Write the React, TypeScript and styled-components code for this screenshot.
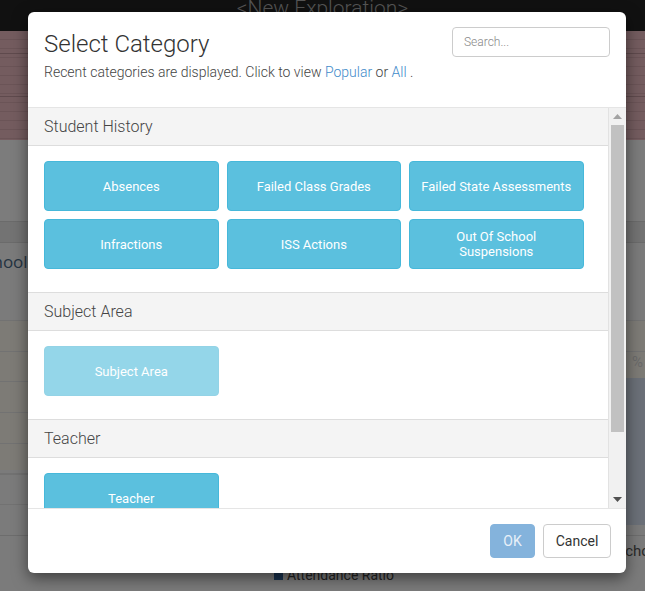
import React from "react";
import styled, { createGlobalStyle } from "styled-components";

const GlobalStyle = createGlobalStyle`
  html, body { margin: 0; padding: 0; }
  body {
    font-family: Roboto, "Liberation Sans", Arial, sans-serif;
    background: #7b7b7b;
    overflow: hidden;
  }
  * { box-sizing: border-box; }
`;

/* ---------- dimmed page behind the dialog ---------- */

const Page = styled.div`
  position: relative;
  width: 645px;
  height: 591px;
  overflow: hidden;
  display: flex;
  flex-direction: column;
  background: #7b7b7b;
`;

const TopBar = styled.div`
  height: 31px;
  flex: none;
  background: #111111;
  overflow: hidden;
  text-align: center;
`;

const TopTitle = styled.div`
  font-size: 21px;
  font-weight: 300;
  line-height: 22px;
  margin-top: -3px;
  color: #555555;
`;

const Band = styled.div`
  height: 109px;
  flex: none;
  background:
    linear-gradient(to bottom, transparent 22px, #5f4a4d 22px, #5f4a4d 23px, transparent 23px, transparent 65px, #5f4a4d 65px, #5f4a4d 66px, transparent 66px),
    repeating-linear-gradient(to bottom, #745c5f 0, #745c5f 8px, #6b5457 8px, #6b5457 9px);
`;

const GraySpace = styled.div`
  height: 81px;
  flex: none;
  background: #7c7c7c;
`;

const Strip = styled.div`
  height: 22px;
  flex: none;
  background: #737373;
  border-top: 1px solid #6b6b6b;
  border-bottom: 1px solid #6b6b6b;
`;

const LabelRow = styled.div`
  height: 77px;
  flex: none;
  padding-top: 7px;
`;

const CutLabel = styled.div`
  font-family: "Open Sans", Roboto, sans-serif;
  font-size: 17px;
  color: #243342;
  margin-left: -25px;
`;

const ChartArea = styled.div`
  height: 215px;
  flex: none;
  display: flex;
  justify-content: flex-end;
  background:
    repeating-linear-gradient(to bottom, #727272 0, #727272 1px, transparent 1px, transparent 30.7px),
    linear-gradient(to bottom, #7d7b76 0, #7d7b76 150px, #7b7b7b 150px);
`;

const RightCol = styled.div`
  width: 19px;
  display: flex;
  flex-direction: column;
  align-items: flex-end;
`;

const Percent = styled.div`
  margin-top: 34px;
  font-size: 15px;
  line-height: 16px;
  color: #6a6a6a;
  margin-right: 2px;
`;

const ChartBar = styled.div`
  margin-top: 8px;
  width: 19px;
  height: 147px;
  background: #6b7078;
`;

const Bottom = styled.div`
  flex: 1;
  border-top: 1px solid #6d6d6d;
  display: flex;
  flex-direction: column;
`;

const BottomRight = styled.div`
  display: flex;
  justify-content: flex-end;
  font-size: 15px;
  color: #2a2a2a;
  margin-top: 6px;
  height: 20px;
  overflow: hidden;
`;

const CutRight = styled.span`
  margin-right: -17px;
`;

const Legend = styled.div`
  display: flex;
  align-items: center;
  gap: 4px;
  margin-left: 274px;
  margin-top: 5px;
  font-size: 14px;
  color: #232323;
`;

const LegendSwatch = styled.span`
  width: 9px;
  height: 9px;
  background: #1b3451;
`;

/* ---------- dialog ---------- */

const Modal = styled.div`
  position: absolute;
  left: 28px;
  top: 12px;
  width: 598px;
  height: 561px;
  background: #ffffff;
  border-radius: 6px;
  box-shadow: 0 5px 15px rgba(0, 0, 0, 0.5);
  display: flex;
  flex-direction: column;
  overflow: hidden;
`;

const Header = styled.div`
  height: 95px;
  flex: none;
  padding: 15px 16px 0 16px;
  display: flex;
  justify-content: space-between;
  align-items: flex-start;
`;

const HeaderText = styled.div`
  display: flex;
  flex-direction: column;
  padding-top: 3px;
`;

const Title = styled.h4`
  margin: 0;
  font-size: 24px;
  line-height: 28px;
  font-weight: 300;
  color: #333333;
`;

const Subtitle = styled.p`
  margin: 4px 0 0 0;
  font-size: 14px;
  line-height: 20px;
  font-weight: 300;
  color: #444444;
`;

const Link = styled.a`
  color: #428bca;
  text-decoration: none;
  cursor: pointer;
`;

const Search = styled.input`
  width: 158px;
  height: 30px;
  padding: 5px 11px;
  border: 1px solid #cccccc;
  border-radius: 4px;
  font-family: Roboto, sans-serif;
  font-size: 12px;
  font-weight: 300;
  color: #555;
  outline: none;
  &::placeholder { color: #888; }
`;

const Body = styled.div`
  height: 401px;
  flex: none;
  border-top: 1px solid #e5e5e5;
  display: flex;
`;

const Scroller = styled.div`
  flex: 1;
  overflow: hidden;
  border-right: 1px solid #e2e2e2;
`;

const SectionHeader = styled.div<{ $first?: boolean }>`
  height: ${(p) => (p.$first ? 38 : 39)}px;
  padding: 0 16px;
  display: flex;
  align-items: center;
  background: #f4f4f4;
  border-top: ${(p) => (p.$first ? "none" : "1px solid #dddddd")};
  border-bottom: 1px solid #dddddd;
  font-size: 16px;
  font-weight: 300;
  color: #444444;
`;

const SectionContent = styled.div`
  padding: 15px 16px 23px 16px;
  display: grid;
  grid-template-columns: repeat(3, 174.5px);
  column-gap: 8px;
  row-gap: 8px;
`;

const CategoryButton = styled.button<{ $disabled?: boolean }>`
  height: 50px;
  padding: 0 10px;
  border-radius: 4px;
  border: 1px solid ${(p) => (p.$disabled ? "#93d3e6" : "#46b8da")};
  background: ${(p) => (p.$disabled ? "#94d6e9" : "#5bc0de")};
  color: #ffffff;
  font-family: Roboto, sans-serif;
  font-size: 13px;
  line-height: 15px;
  font-weight: 400;
  text-align: center;
  cursor: pointer;
`;

const ScrollTrack = styled.div`
  width: 17px;
  flex: none;
  background: #f1f1f1;
  display: flex;
  flex-direction: column;
  align-items: center;
`;

const ArrowBox = styled.div`
  height: 17px;
  width: 17px;
  flex: none;
  display: flex;
  align-items: center;
  justify-content: center;
`;

const Thumb = styled.div`
  width: 13px;
  height: 307px;
  flex: none;
  background: #c1c1c1;
`;

const TrackFill = styled.div`
  flex: 1;
`;

const Footer = styled.div`
  flex: 1;
  border-top: 1px solid #e5e5e5;
  padding: 15px 15px 15px 16px;
  display: flex;
  justify-content: flex-end;
  align-items: flex-start;
  gap: 8px;
`;

const FooterButton = styled.button<{ $primary?: boolean }>`
  height: 34px;
  width: ${(p) => (p.$primary ? 45 : 68)}px;
  padding: 0;
  border-radius: 4px;
  font-family: Roboto, sans-serif;
  font-size: 14px;
  font-weight: 400;
  border: 1px solid ${(p) => (p.$primary ? "#84b3dc" : "#cccccc")};
  background: ${(p) => (p.$primary ? "#84b3dc" : "#ffffff")};
  color: ${(p) => (p.$primary ? "#e8f0f8" : "#333333")};
  cursor: pointer;
`;

const Arrow = ({ up, color }: { up?: boolean; color: string }) => (
  <svg width="9" height="5" viewBox="0 0 9 5">
    <polygon points={up ? "0,5 9,5 4.5,0" : "0,0 9,0 4.5,5"} fill={color} />
  </svg>
);

type Section = { title: string; items: { label: string; disabled?: boolean }[] };

const sections: Section[] = [
  {
    title: "Student History",
    items: [
      { label: "Absences" },
      { label: "Failed Class Grades" },
      { label: "Failed State Assessments" },
      { label: "Infractions" },
      { label: "ISS Actions" },
      { label: "Out Of School Suspensions" },
    ],
  },
  { title: "Subject Area", items: [{ label: "Subject Area", disabled: true }] },
  { title: "Teacher", items: [{ label: "Teacher" }] },
];

export default function App() {
  return (
    <>
      <GlobalStyle />
      <Page>
        <TopBar>
          <TopTitle>&lt;New Exploration&gt;</TopTitle>
        </TopBar>
        <Band />
        <GraySpace />
        <Strip />
        <LabelRow>
          <CutLabel>School</CutLabel>
        </LabelRow>
        <ChartArea>
          <RightCol>
            <Percent>%</Percent>
            <ChartBar />
          </RightCol>
        </ChartArea>
        <Bottom>
          <BottomRight>
            <CutRight>School</CutRight>
          </BottomRight>
          <Legend>
            <LegendSwatch />
            Attendance Ratio
          </Legend>
        </Bottom>

        <Modal>
          <Header>
            <HeaderText>
              <Title>Select Category</Title>
              <Subtitle>
                Recent categories are displayed. Click to view <Link>Popular</Link> or <Link>All</Link> .
              </Subtitle>
            </HeaderText>
            <Search placeholder="Search..." />
          </Header>
          <Body>
            <Scroller>
              {sections.map((s, i) => (
                <div key={s.title}>
                  <SectionHeader $first={i === 0}>{s.title}</SectionHeader>
                  <SectionContent>
                    {s.items.map((it) => (
                      <CategoryButton key={it.label} $disabled={it.disabled}>
                        {it.label}
                      </CategoryButton>
                    ))}
                  </SectionContent>
                </div>
              ))}
            </Scroller>
            <ScrollTrack>
              <ArrowBox>
                <Arrow up color="#a3a3a3" />
              </ArrowBox>
              <Thumb />
              <TrackFill />
              <ArrowBox>
                <Arrow color="#505050" />
              </ArrowBox>
            </ScrollTrack>
          </Body>
          <Footer>
            <FooterButton $primary>OK</FooterButton>
            <FooterButton>Cancel</FooterButton>
          </Footer>
        </Modal>
      </Page>
    </>
  );
}
